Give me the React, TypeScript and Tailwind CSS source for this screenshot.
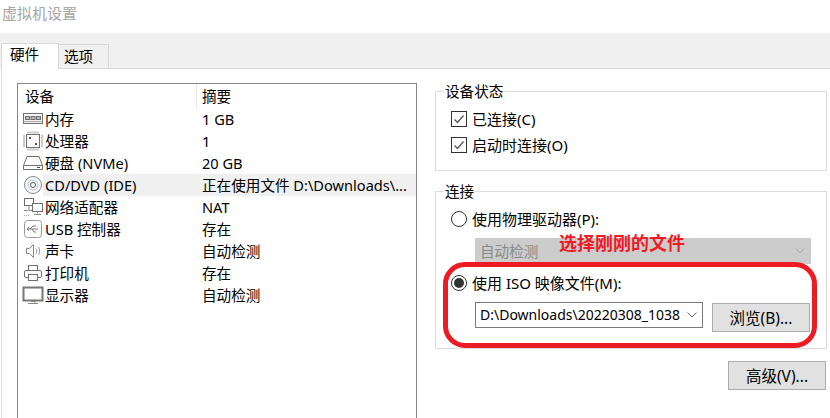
import React from "react";

const S = ({ children }: { children: React.ReactNode }) => (
  <svg width="22" height="20" viewBox="0 0 22 20" fill="none" stroke="#6f6f6f" strokeWidth="1" className="shrink-0">
    {children}
  </svg>
);

const icons: Record<string, React.ReactNode> = {
  mem: (
    <S>
      <rect x="1.5" y="4.5" width="19" height="10" fill="#f4f4f4" />
      <rect x="3.5" y="7.5" width="4" height="3" fill="#bbb" />
      <rect x="9" y="7.5" width="4" height="3" fill="#bbb" />
      <rect x="14.5" y="7.5" width="4" height="3" fill="#bbb" />
      <path d="M1.5 12.5h19" stroke="#aaa" />
    </S>
  ),
  cpu: (
    <S>
      <rect x="4.5" y="3.5" width="13" height="13" fill="#fafafa" />
      <path d="M6 .5v2M8 .5v2M10 .5v2M12 .5v2M14 .5v2M16 .5v2M6 17.500v2M8 17.500v2M10 17.500v2M12 17.500v2M14 17.500v2M16 17.500v2M1 5h2M1 7h2M1 9h2M1 11h2M1 13h2M1 15h2M19 5h2M19 7h2M19 9h2M19 11h2M19 13h2M19 15h2" stroke="#999" />
      <rect x="7" y="6" width="2" height="2" fill="#555" stroke="none" />
      <rect x="13" y="12" width="2" height="2" fill="#555" stroke="none" />
    </S>
  ),
  disk: (
    <S>
      <path d="M5 3.5h12l3.5 9v4h-19v-4z" fill="#fff" />
      <path d="M1.5 12.5h19" />
      <path d="M15 14.5h3" stroke="#444" />
    </S>
  ),
  cd: (
    <S>
      <circle cx="11" cy="10" r="8.5" fill="#f8f8f8" stroke="#7f8d99" />
      <circle cx="11" cy="10" r="5" stroke="#b5c6d3" />
      <circle cx="11" cy="10" r="2.5" fill="#fff" stroke="#555" />
    </S>
  ),
  net: (
    <S>
      <rect x="2.5" y="1.5" width="9" height="7" fill="#fff" />
      <rect x="10.5" y="6.5" width="10" height="8" fill="#fff" />
      <path d="M7 8.5v5h3M15.5 14.5v2M12 17.5h7M2 13.5h4" stroke="#888" />
      <path d="M2 18.5h6" stroke="#aaa" strokeDasharray="1 1" />
    </S>
  ),
  usb: (
    <S>
      <rect x="2.5" y="1.5" width="17" height="17" rx="3" fill="#fff" stroke="#999" />
      <path d="M5 10h11M8 10l3-3h3M10 10l2 3h2" stroke="#777" />
      <path d="M7 8l-2 2 2 2" stroke="#777" />
    </S>
  ),
  sound: (
    <S>
      <path d="M4.5 7.5h3l4-4v13l-4-4h-3z" fill="#fff" stroke="#888" />
      <path d="M14 7.5c1 1.5 1 3.5 0 5M16.5 6c1.5 2.5 1.5 5.500 0 8" stroke="#999" />
    </S>
  ),
  print: (
    <S>
      <rect x="6.500" y="2.500" width="9" height="5" fill="#fff" />
      <rect x="2.500" y="7.500" width="17" height="7" rx="1.500" fill="#fff" />
      <rect x="6.500" y="11.500" width="9" height="6" fill="#fff" />
    </S>
  ),
  disp: (
    <S>
      <rect x="1.500" y="2.500" width="19" height="13" fill="#fff" strokeWidth="2" stroke="#777" />
      <path d="M9 16.500h4v1.500M6 18.500h10" stroke="#888" />
    </S>
  ),
};

const rows = [
  ["mem", "内存", "1 GB"],
  ["cpu", "处理器", "1"],
  ["disk", "硬盘 (NVMe)", "20 GB"],
  ["cd", "CD/DVD (IDE)", "正在使用文件 D:\\Downloads\\..."],
  ["net", "网络适配器", "NAT"],
  ["usb", "USB 控制器", "存在"],
  ["sound", "声卡", "自动检测"],
  ["print", "打印机", "存在"],
  ["disp", "显示器", "自动检测"],
];

const Check = ({ label }: { label: string }) => (
  <div className="flex h-[26px] items-center gap-[5px] text-[15px]">
    <span className="flex h-4 w-4 items-center justify-center border border-[#333] bg-white">
      <svg width="12" height="12" viewBox="0 0 12 12" fill="none" stroke="#555" strokeWidth="1.300">
        <path d="M1.500 6.500l3 3 6-7" />
      </svg>
    </span>
    <span>{label}</span>
  </div>
);

const Radio = ({ label, on }: { label: string; on?: boolean }) => (
  <div className="flex h-[26px] items-center gap-[5px] text-[15px]">
    <span className="flex h-4 w-4 items-center justify-center rounded-full border border-[#333] bg-white">
      {on && <span className="h-[10px] w-[10px] rounded-full bg-[#333]" />}
    </span>
    <span>{label}</span>
  </div>
);

const Chevron = ({ color }: { color: string }) => (
  <svg width="10" height="6" viewBox="0 0 10 6" fill="none" stroke={color}>
    <path d="M.5.500l4.500 4.500 4.500-4.500" />
  </svg>
);

export default function App() {
  return (
    <div className="flex h-[418px] w-[830px] flex-col overflow-hidden bg-white text-[14.6px] leading-[22px] text-black [font-family:'Noto_Sans','Noto_Sans_CJK_SC',sans-serif]">
      <div className="h-[33px] pl-[2px] pt-[2px] text-[15px] text-[#a6a6a6]">虚拟机设置</div>

      <div className="flex h-[35px] items-end bg-[#f0f0f0] pl-px">
        <div className="relative z-10 flex h-[26px] w-[58px] -mb-px items-center border border-b-0 border-[#d9d9d9] bg-white pb-[5px] pl-[8px]">
          硬件
        </div>
        <div className="flex h-[24px] w-[50px] items-center border border-l-0 border-b-0 border-[#d9d9d9] pb-[2px] pl-[5px]">
          选项
        </div>
      </div>

      <div className="ml-px flex min-h-0 flex-1 border-t border-l border-[#d9d9d9] pl-[15px] pt-[14px]">
        <div className="flex h-[400px] w-[400px] shrink-0 flex-col border border-[#828790] pl-px">
          <div className="flex h-[24px] shrink-0 items-center">
            <div className="h-[22px] w-[178px] border-r border-[#e5e5e5] pl-[6px]">设备</div>
            <div className="pl-[5px]">摘要</div>
          </div>
          {rows.map(([ic, name, val]) => {
            const sel = ic === "cd";
            return (
              <div key={ic} className="flex h-[22px] shrink-0 items-center">
                <div className="flex w-[179px] shrink-0 items-center">
                  <div className="w-[24px] shrink-0 pl-[3px]">{icons[ic]}</div>
                  <div className={`h-[22px] flex-1 pl-[2px] ${sel ? "bg-[#f0f0f0]" : ""}`}>{name}</div>
                </div>
                <div className={`h-[22px] flex-1 pl-[4px] ${sel ? "bg-[#f0f0f0]" : ""}`}>{val}</div>
              </div>
            );
          })}
        </div>

        <div className="ml-[18px] flex w-[392px] shrink-0 flex-col">
          <fieldset className="h-[88px] border border-[#dcdcdc]">
            <legend className="ml-[8px] px-px leading-[16px]">设备状态</legend>
            <div className="pl-[15px] pt-[7px]">
              <Check label="已连接(C)" />
              <Check label="启动时连接(O)" />
            </div>
          </fieldset>

          <fieldset className="mt-[12px] h-[166px] border border-[#dcdcdc]">
            <legend className="ml-[8px] px-px leading-[16px]">连接</legend>
            <div className="pl-[15px] pt-[7px]">
              <Radio label="使用物理驱动器(P):" />
              <div className="relative ml-[24px] mt-[6px] flex h-[26px] w-[336px] items-center justify-between bg-[#cccccc] pl-[5px] pr-[6px] text-[#8a8a8a]">
                <span>自动检测</span>
                <Chevron color="#a8a8a8" />
                <span className="absolute left-[84px] top-[-6px] text-[18px] font-bold text-[#ef1c25]">
                  选择刚刚的文件
                </span>
              </div>
              <div className="relative mt-[6px]">
                <Radio label="使用 ISO 映像文件(M):" on />
                <div className="mt-[6px] flex items-start">
                  <div className="ml-[24px] flex h-[26px] w-[228px] items-center justify-between border border-[#7a7a7a] bg-white pl-[4px] pr-[5px] text-[14px]">
                    <span className="whitespace-nowrap">D:\Downloads\20220308_1038</span>
                    <Chevron color="#666" />
                  </div>
                  <button className="ml-[9px] mt-px h-[29px] w-[98px] border border-[#adadad] bg-[#e1e1e1] text-[15.5px]">浏览(B)...</button>
                </div>
                <div className="absolute left-[-8px] top-[-8px] h-[86px] w-[374px] rounded-[22px] border-[5px] border-[#ed1c24]" />
              </div>
            </div>
          </fieldset>

          <div className="mt-[12px] flex justify-end pr-px">
            <button className="h-[29px] w-[98px] border border-[#adadad] bg-[#e1e1e1] text-[15.5px]">高级(V)...</button>
          </div>
        </div>
      </div>
    </div>
  );
}
